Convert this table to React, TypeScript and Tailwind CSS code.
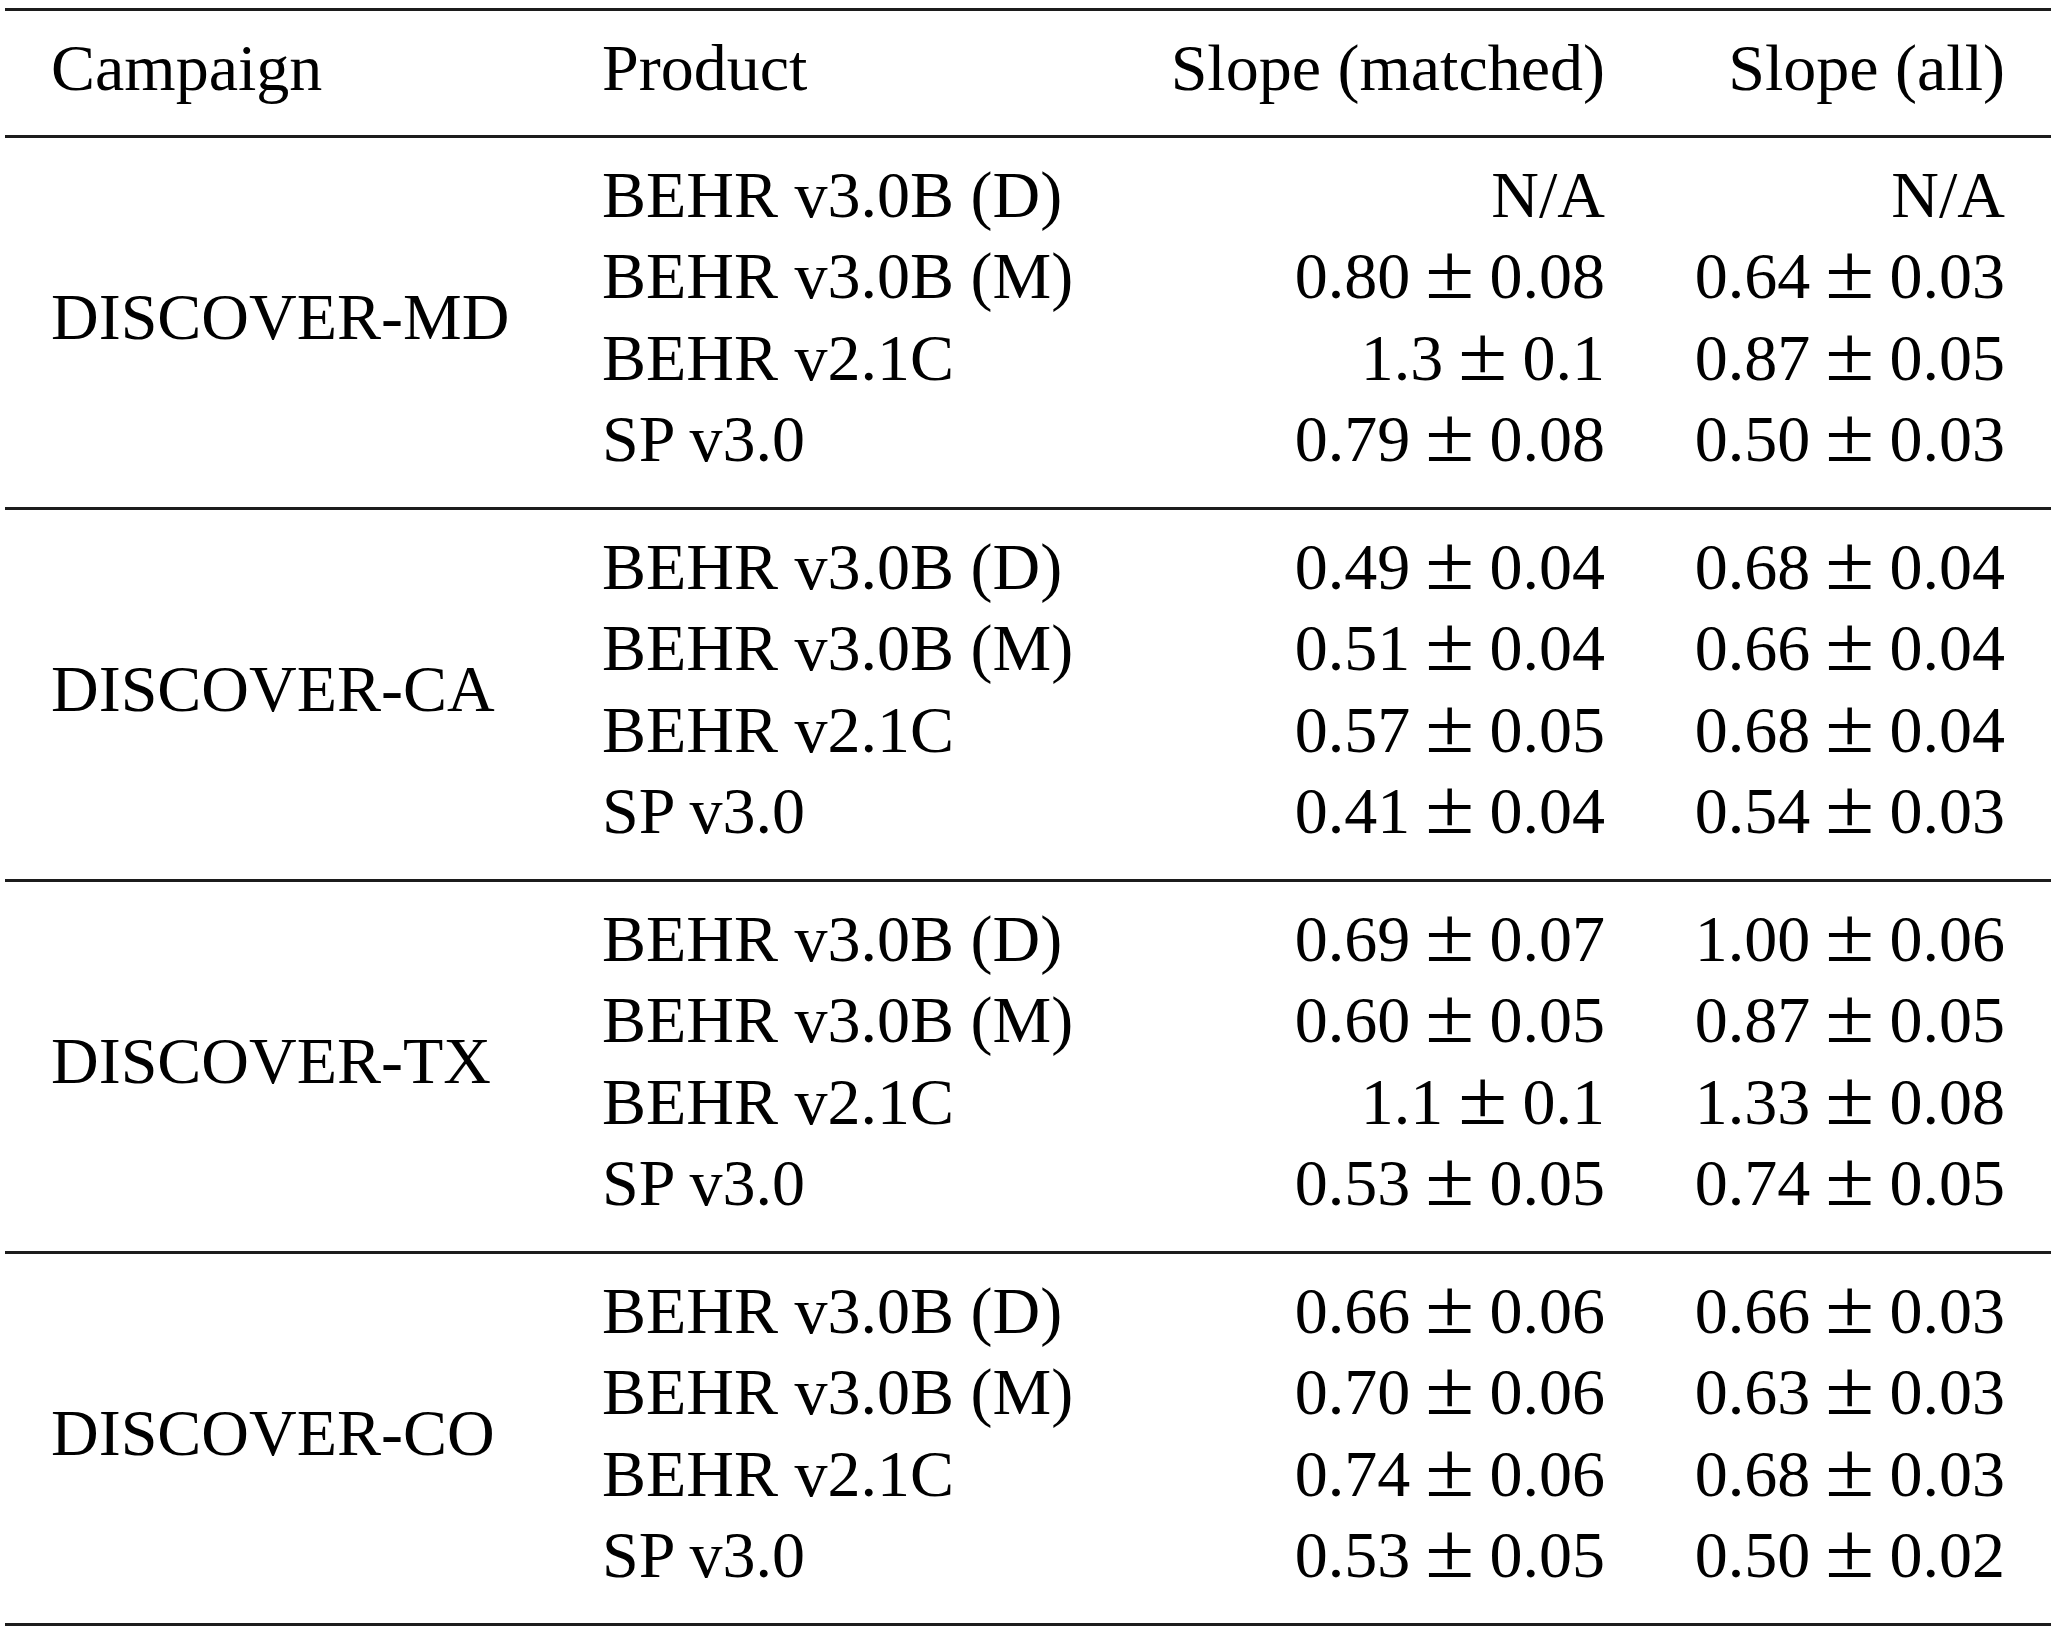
import React from "react";

type Row = { product: string; matched: [string, string] | null; all: [string, string] | null };
type Section = { campaign: string; rows: Row[] };

const sections: Section[] = [
  {
    campaign: "DISCOVER-MD",
    rows: [
      { product: "BEHR v3.0B (D)", matched: null, all: null },
      { product: "BEHR v3.0B (M)", matched: ["0.80", "0.08"], all: ["0.64", "0.03"] },
      { product: "BEHR v2.1C", matched: ["1.3", "0.1"], all: ["0.87", "0.05"] },
      { product: "SP v3.0", matched: ["0.79", "0.08"], all: ["0.50", "0.03"] },
    ],
  },
  {
    campaign: "DISCOVER-CA",
    rows: [
      { product: "BEHR v3.0B (D)", matched: ["0.49", "0.04"], all: ["0.68", "0.04"] },
      { product: "BEHR v3.0B (M)", matched: ["0.51", "0.04"], all: ["0.66", "0.04"] },
      { product: "BEHR v2.1C", matched: ["0.57", "0.05"], all: ["0.68", "0.04"] },
      { product: "SP v3.0", matched: ["0.41", "0.04"], all: ["0.54", "0.03"] },
    ],
  },
  {
    campaign: "DISCOVER-TX",
    rows: [
      { product: "BEHR v3.0B (D)", matched: ["0.69", "0.07"], all: ["1.00", "0.06"] },
      { product: "BEHR v3.0B (M)", matched: ["0.60", "0.05"], all: ["0.87", "0.05"] },
      { product: "BEHR v2.1C", matched: ["1.1", "0.1"], all: ["1.33", "0.08"] },
      { product: "SP v3.0", matched: ["0.53", "0.05"], all: ["0.74", "0.05"] },
    ],
  },
  {
    campaign: "DISCOVER-CO",
    rows: [
      { product: "BEHR v3.0B (D)", matched: ["0.66", "0.06"], all: ["0.66", "0.03"] },
      { product: "BEHR v3.0B (M)", matched: ["0.70", "0.06"], all: ["0.63", "0.03"] },
      { product: "BEHR v2.1C", matched: ["0.74", "0.06"], all: ["0.68", "0.03"] },
      { product: "SP v3.0", matched: ["0.53", "0.05"], all: ["0.50", "0.02"] },
    ],
  },
];

function Val({ v }: { v: [string, string] | null }) {
  if (!v) return <span>N/A</span>;
  return (
    <span>
      {v[0]}
      <span className="inline-block mx-[18px] text-[79px] leading-[60px] scale-x-[1.13]">±</span>
      {v[1]}
    </span>
  );
}

function Rule() {
  return <div className="h-[3px] bg-[#1c1c1c]" />;
}

export default function App() {
  return (
    <div className="w-[2066px] h-[1632px] bg-white text-black font-['Liberation_Serif','Times_New_Roman',serif] text-[66px] leading-[81.5px]">
      <div className="pt-[8px] pl-[5px] w-[2051px]">
        <Rule />
        <div className="grid grid-cols-[551px_566px_529px_400px] pt-[16px] pb-[26px]">
          <div className="pl-[46px] whitespace-nowrap">Campaign</div>
          <div className="pl-[46px] whitespace-nowrap">Product</div>
          <div className="pr-[46px] text-right whitespace-nowrap">Slope (matched)</div>
          <div className="pr-[46px] text-right whitespace-nowrap">Slope (all)</div>
        </div>
        <Rule />
        {sections.map((s) => (
          <div key={s.campaign}>
            <div className="grid grid-cols-[551px_566px_529px_400px] pt-[16px] pb-[27px]">
              <div className="pl-[46px] whitespace-nowrap flex items-center">{s.campaign}</div>
              <div className="pl-[46px] flex flex-col">
                {s.rows.map((r) => (
                  <div key={r.product} className="whitespace-nowrap">{r.product}</div>
                ))}
              </div>
              <div className="pr-[46px] flex flex-col items-end">
                {s.rows.map((r) => (
                  <div key={r.product} className="whitespace-nowrap">
                    <Val v={r.matched} />
                  </div>
                ))}
              </div>
              <div className="pr-[46px] flex flex-col items-end">
                {s.rows.map((r) => (
                  <div key={r.product} className="whitespace-nowrap">
                    <Val v={r.all} />
                  </div>
                ))}
              </div>
            </div>
            <Rule />
          </div>
        ))}
      </div>
    </div>
  );
}
